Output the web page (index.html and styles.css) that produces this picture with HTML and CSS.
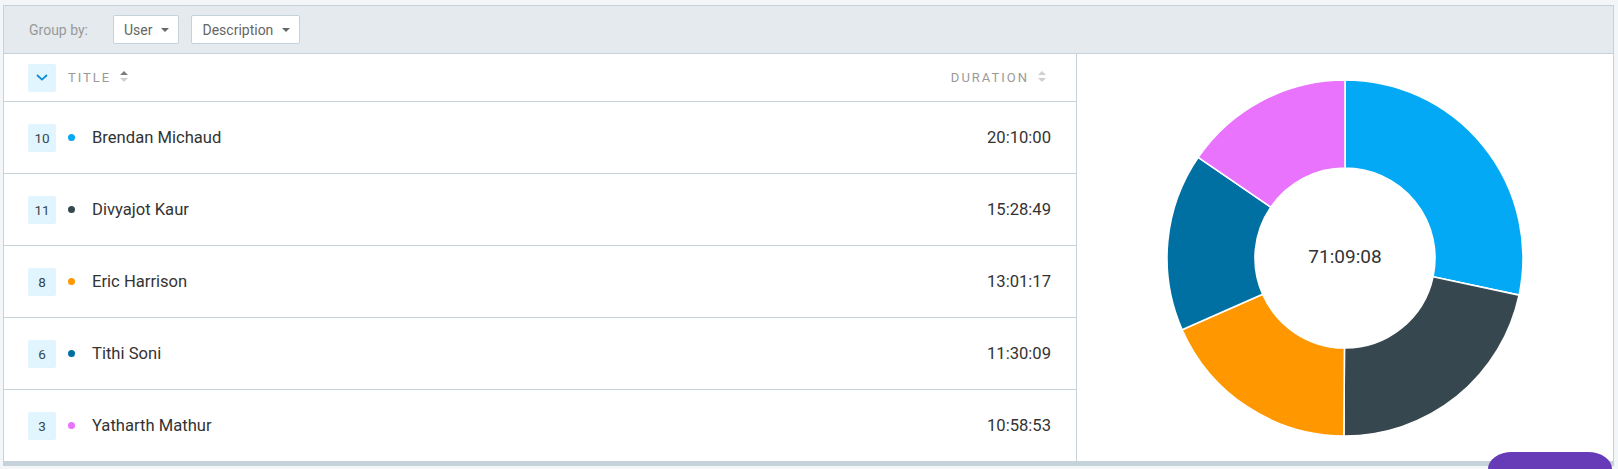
FILE: index.html
```html
<!DOCTYPE html>
<html>
<head>
<meta charset="utf-8">
<link rel="stylesheet" href="styles.css">
</head>
<body>
<div class="report">
  <div class="toolbar">
    <span class="group-label">Group by:</span>
    <button class="dd">User<span class="caret"></span></button>
    <button class="dd">Description<span class="caret"></span></button>
  </div>
  <div class="content">
    <div class="table">
      <div class="thead">
        <span class="expand"><svg width="12" height="7" viewBox="0 0 12 7"><path d="M1 1 L6 5.6 L11 1" fill="none" stroke="#0b8ad3" stroke-width="1.7"/></svg></span>
        <span class="th th-title">Title<svg class="sort" width="8" height="11" viewBox="0 0 8 11"><path d="M0 4 L4 0 L8 4Z" fill="#7d7d7d"/><path d="M0 7 L8 7 L4 11Z" fill="#cfcfcf"/></svg></span>
        <span class="th th-dur">Duration<svg class="sort" width="8" height="11" viewBox="0 0 8 11"><path d="M0 4 L4 0 L8 4Z" fill="#cfcfcf"/><path d="M0 7 L8 7 L4 11Z" fill="#cfcfcf"/></svg></span>
      </div>
      <div class="row">
        <span class="badge">10</span><span class="dot c1"></span><span class="name">Brendan Michaud</span><span class="dur">20:10:00</span>
      </div>
      <div class="row">
        <span class="badge">11</span><span class="dot c2"></span><span class="name">Divyajot Kaur</span><span class="dur">15:28:49</span>
      </div>
      <div class="row">
        <span class="badge">8</span><span class="dot c3"></span><span class="name">Eric Harrison</span><span class="dur">13:01:17</span>
      </div>
      <div class="row">
        <span class="badge">6</span><span class="dot c4"></span><span class="name">Tithi Soni</span><span class="dur">11:30:09</span>
      </div>
      <div class="row">
        <span class="badge">3</span><span class="dot c5"></span><span class="name">Yatharth Mathur</span><span class="dur">10:58:53</span>
      </div>
    </div>
    <div class="chart">
      <svg class="donut" width="360" height="360" viewBox="0 0 360 360">
        <g stroke="#ffffff" stroke-width="1.6" stroke-linejoin="round">
          <path fill="#03a9f4" d="M180 2 A178 178 0 0 1 354.09 217.12 L268.02 198.77 A90 90 0 0 0 180 90 Z"/>
          <path fill="#37474f" d="M354.09 217.12 A178 178 0 0 1 178.88 358 L179.44 270 A90 90 0 0 0 268.02 198.77 Z"/>
          <path fill="#ff9800" d="M178.88 358 A178 178 0 0 1 17.08 251.72 L97.63 216.26 A90 90 0 0 0 179.44 270 Z"/>
          <path fill="#006fa1" d="M17.08 251.72 A178 178 0 0 1 33.2 79.34 L105.77 129.1 A90 90 0 0 0 97.63 216.26 Z"/>
          <path fill="#e973fd" d="M33.2 79.34 A178 178 0 0 1 180 2 L180 90 A90 90 0 0 0 105.77 129.1 Z"/>
        </g>
        <text class="total" x="180" y="185" text-anchor="middle">71:09:08</text>
      </svg>
    </div>
  </div>
</div>
<div class="fab"></div>
</body>
</html>
```

FILE: styles.css
```css
html, body {
  margin: 0;
  padding: 0;
}
body {
  background: #f2f6f8;
  font-family: Roboto, "Liberation Sans", sans-serif;
  color: #333;
  height: 469px;
  overflow: hidden;
  position: relative;
}
.report {
  margin: 5px 4px 0 3px;
  border: 1px solid #c6d2d9;
  border-bottom: 5px solid #c6d2d9;
  background: #fff;
}
.toolbar {
  height: 47px;
  background: #e4eaee;
  border-bottom: 1px solid #c6d2d9;
  display: flex;
  align-items: center;
  padding-left: 25px;
}
.group-label {
  font-size: 14px;
  color: #999;
  margin-right: 25px;
}
.dd {
  height: 29px;
  box-sizing: border-box;
  border: 1px solid #c6d2d9;
  border-radius: 2px;
  background: #fff;
  font-family: Roboto, "Liberation Sans", sans-serif;
  font-size: 14px;
  color: #666;
  padding: 0 9px 0 10px;
  display: flex;
  align-items: center;
  gap: 9px;
  margin-right: 12px;
}
.caret {
  width: 0;
  height: 0;
  border-left: 4px solid transparent;
  border-right: 4px solid transparent;
  border-top: 4px solid #666;
}
.content {
  display: flex;
}
.table {
  width: 1072px;
  border-right: 1px solid #c6d2d9;
}
.thead {
  height: 47px;
  border-bottom: 1px solid #c6d2d9;
  display: flex;
  align-items: center;
  padding: 0 30px 0 24px;
}
.expand {
  width: 28px;
  height: 28px;
  border-radius: 2px;
  background: #e1f5fe;
  display: flex;
  align-items: center;
  justify-content: center;
  margin-right: 12px;
}
.th {
  font-size: 13px;
  letter-spacing: 2px;
  text-transform: uppercase;
  color: #999;
  display: flex;
  align-items: center;
}
.sort {
  margin-left: 9px;
  margin-top: -3px;
}
.th-dur {
  margin-left: auto;
}
.row {
  height: 71px;
  border-bottom: 1px solid #c6d2d9;
  display: flex;
  align-items: center;
  padding: 0 25px 0 24px;
}
.row:last-child {
  border-bottom: none;
}
.badge {
  width: 28px;
  height: 28px;
  border-radius: 2px;
  background: #e1f5fe;
  font-size: 13.5px;
  color: #37474f;
  display: flex;
  align-items: center;
  justify-content: center;
}
.dot {
  width: 7px;
  height: 7px;
  border-radius: 50%;
  margin-left: 12px;
}
.c1 { background: #03a9f4; }
.c2 { background: #37474f; }
.c3 { background: #ff9800; }
.c4 { background: #006fa1; }
.c5 { background: #e973fd; }
.name {
  font-size: 16.6px;
  color: #333;
  margin-left: 17px;
}
.dur {
  margin-left: auto;
  font-size: 16.6px;
  color: #333;
}
.chart {
  flex: 1;
  display: flex;
  align-items: center;
  justify-content: center;
}
.total {
  font-family: Roboto, "Liberation Sans", sans-serif;
  font-size: 19px;
  fill: #333;
}
.fab {
  position: absolute;
  left: 1488px;
  top: 452px;
  width: 124px;
  height: 17px;
  border-radius: 24px 24px 0 0 / 17px 17px 0 0;
  background: #673ab7;
}
```
